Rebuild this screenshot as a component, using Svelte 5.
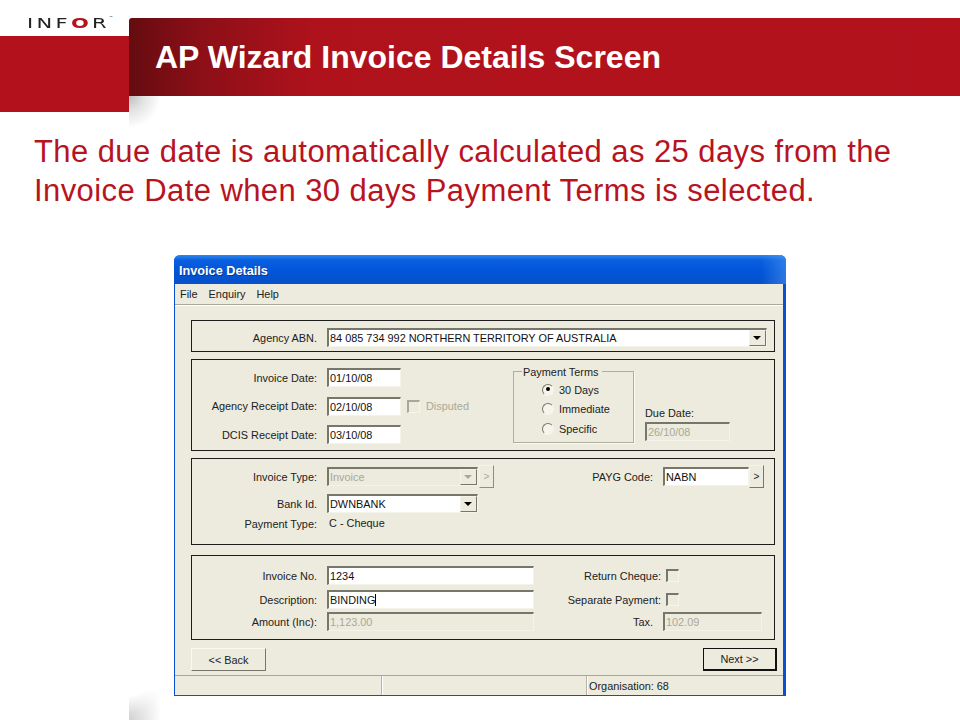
<script>
  const menus = ['File', 'Enquiry', 'Help']
  const terms = [
    { label: '30 Days', on: true },
    { label: 'Immediate', on: false },
    { label: 'Specific', on: false }
  ]
</script>

<div class="slide">
  <header class="top">
    <div class="brand">
      <div class="logo"><span class="mark">INF<b>O</b>R</span><sup>™</sup></div>
      <div class="block"></div>
    </div>
    <div class="banner">
      <h1>AP Wizard Invoice Details Screen</h1>
      <div class="shade"></div>
    </div>
  </header>

  <p class="lead">The due date is automatically calculated as 25 days from the Invoice Date when 30 days Payment Terms is selected.</p>

  <div class="stage">
    <div class="edge"></div>
    <div class="window">
      <div class="titlebar">Invoice Details</div>
      <nav class="menu">
        {#each menus as m}<span>{m}</span>{/each}
      </nav>

      <div class="client">
        <section class="frame f1">
          <div class="row">
            <label class="lbl" for="abn">Agency ABN.</label>
            <div class="field combo w440" id="abn">
              <span>84 085 734 992 NORTHERN TERRITORY OF AUSTRALIA</span>
              <i class="drop"></i>
            </div>
          </div>
        </section>

        <section class="frame f2">
          <div class="col dates">
            <div class="row">
              <span class="lbl">Invoice Date:</span>
              <div class="field w74">01/10/08</div>
            </div>
            <div class="row">
              <span class="lbl">Agency Receipt Date:</span>
              <div class="field w74">02/10/08</div>
              <i class="check off"></i>
              <span class="muted">Disputed</span>
            </div>
            <div class="row">
              <span class="lbl">DCIS Receipt Date:</span>
              <div class="field w74">03/10/08</div>
            </div>
          </div>
          <div class="group">
            <span class="legend">Payment Terms</span>
            {#each terms as t}
              <div class="radio-row">
                <i class="radio" class:on={t.on}></i>
                <span>{t.label}</span>
              </div>
            {/each}
          </div>
          <div class="due">
            <span>Due Date:</span>
            <div class="field off-field w85">26/10/08</div>
          </div>
        </section>

        <section class="frame f3">
          <div class="col types">
            <div class="row">
              <span class="lbl">Invoice Type:</span>
              <div class="field combo off-field w151">
                <span>Invoice</span>
                <i class="drop off"></i>
              </div>
              <button class="more off">&gt;</button>
            </div>
            <div class="row">
              <span class="lbl">Bank Id.</span>
              <div class="field combo w151">
                <span>DWNBANK</span>
                <i class="drop"></i>
              </div>
            </div>
            <div class="row pay">
              <span class="lbl">Payment Type:</span>
              <span class="value">C - Cheque</span>
            </div>
          </div>
          <div class="payg">
            <span class="lbl2">PAYG Code:</span>
            <div class="field w86">NABN</div>
            <button class="more">&gt;</button>
          </div>
        </section>

        <section class="frame f4">
          <div class="col nums">
            <div class="row">
              <span class="lbl">Invoice No.</span>
              <div class="field w207">1234</div>
            </div>
            <div class="row">
              <span class="lbl">Description:</span>
              <div class="field w207">BINDING<em class="caret"></em></div>
            </div>
            <div class="row">
              <span class="lbl">Amount (Inc):</span>
              <div class="field off-field w207">1,123.00</div>
            </div>
          </div>
          <div class="col extras">
            <div class="row end">
              <span>Return Cheque:</span>
              <i class="check"></i>
            </div>
            <div class="row end">
              <span>Separate Payment:</span>
              <i class="check"></i>
            </div>
            <div class="row tax">
              <span class="lbl2">Tax.</span>
              <div class="field off-field w99">102.09</div>
            </div>
          </div>
        </section>

        <div class="actions">
          <button class="btn">&lt;&lt; Back</button>
          <button class="btn primary">Next &gt;&gt;</button>
        </div>
      </div>

      <footer class="status">
        <span class="s1"></span>
        <span class="s2"></span>
        <span class="s3">Organisation: 68</span>
      </footer>
    </div>
  </div>
</div>

<style>
  :global(body) {
    margin: 0;
    background: #fff;
  }

  .slide {
    width: 960px;
    height: 720px;
    overflow: hidden;
    font-family: "Liberation Sans", Arial, sans-serif;
  }

  /* header */
  .top {
    display: flex;
    height: 128px;
  }
  .brand {
    width: 129px;
  }
  .logo {
    height: 36px;
    box-sizing: border-box;
    padding: 14px 0 0 27px;
    font-family: "DejaVu Sans", sans-serif;
    font-size: 14px;
    line-height: 18px;
    color: #222;
    white-space: nowrap;
    display: flex;
  }
  .mark {
    display: block;
    width: 52px;
    letter-spacing: 2.2px;
    transform: scaleX(1.5);
    transform-origin: 0 50%;
  }
  .logo b {
    color: #b5121b;
  }
  .logo sup {
    font-size: 4px;
    margin-left: 30px;
    line-height: 8px;
  }
  .block {
    height: 76px;
    background: #b3121d;
  }
  .banner {
    flex: 1;
    padding-top: 18px;
  }
  h1 {
    margin: 0;
    height: 78px;
    box-sizing: border-box;
    padding: 22px 0 0 26px;
    font-size: 32px;
    line-height: 34px;
    font-weight: 700;
    color: #fff;
    background: linear-gradient(90deg, #640c10 0, #8c0f17 70px, #b0121c 190px, #b3121d 100%);
    border-top-left-radius: 3px;
  }
  .shade {
    width: 32px;
    height: 32px;
    background: radial-gradient(ellipse 32px 32px at 0 0, #bdbdbd 0, #e2e2e2 45%, #fff 100%);
  }

  .lead {
    margin: 4px 0 0 34px;
    width: 890px;
    font-size: 31px;
    line-height: 39px;
    letter-spacing: 0.42px;
    color: #b8141f;
  }

  /* window */
  .stage {
    display: flex;
    margin-top: 45px;
  }
  .edge {
    width: 129px;
    flex: none;
    position: relative;
  }
  .edge::after {
    content: '';
    position: absolute;
    left: 129px;
    top: 435px;
    width: 32px;
    height: 30px;
    background: linear-gradient(160deg, #fff 15%, #d6d6d6 60%, #c8c8c8 100%);
    -webkit-mask-image: linear-gradient(90deg, #000, transparent);
    mask-image: linear-gradient(90deg, #000, transparent);
  }
  .window {
    width: 612px;
    height: 441px;
    margin-left: 45px;
    box-sizing: border-box;
    display: flex;
    flex-direction: column;
    background: #ecebdd;
    border: solid #0a50d0;
    border-width: 0 3px 1px 1px;
    border-radius: 6px 6px 0 0;
    font-size: 10.9px;
    color: #222;
    position: relative;
    z-index: 1;
  }
  .titlebar {
    height: 29px;
    margin: 0 -3px 0 -1px;
    box-sizing: border-box;
    padding: 9px 0 0 5px;
    font-size: 12.7px;
    line-height: 15px;
    font-weight: 700;
    color: #fff;
    background:
      linear-gradient(90deg, transparent 96%, rgba(80, 150, 240, .55) 100%),
      linear-gradient(180deg, #2f86ee 0, #0a5fe0 18%, #0055d8 60%, #0a50c8 100%);
    border-radius: 6px 6px 0 0;
    text-shadow: 1px 1px 0 #0a3a90;
  }
  .menu {
    height: 19px;
    padding-bottom: 1px;
    display: flex;
    align-items: center;
    padding-left: 5px;
    gap: 11px;
    border-bottom: 1px solid #a8a89c;
    box-shadow: 0 1px 0 #fff;
    flex: none;
  }
  .client {
    flex: 1;
    padding: 15px 8px 0 16px;
  }

  /* group frames */
  .frame {
    box-sizing: border-box;
    width: 584px;
    border: 1px solid #1c1c1c;
    margin-bottom: 7px;
    display: flex;
  }
  .f1 { height: 32px; padding-top: 7px; }
  .f2 { height: 92px; }
  .f3 { height: 87px; margin-bottom: 10px; }
  .f4 { height: 85px; margin-bottom: 8px; }

  .col {
    display: flex;
    flex-direction: column;
  }
  .row {
    display: flex;
    align-items: center;
    height: 19px;
  }
  .lbl {
    width: 125px;
    margin-right: 10px;
    text-align: right;
    flex: none;
  }

  /* sunken fields */
  .field {
    height: 19px;
    box-sizing: border-box;
    padding: 1px 0 0 1px;
    line-height: 15px;
    background: #fff;
    border: solid;
    border-width: 2px 1px 1px 2px;
    border-color: #77766a #f4f3ea #f4f3ea #77766a;
    white-space: nowrap;
    flex: none;
    color: #111;
  }
  .off-field {
    background: #ecebdd;
    color: #a9a898;
  }
  .combo {
    display: flex;
    justify-content: space-between;
    padding-right: 0;
  }
  .w74 { width: 74px; }
  .w85 { width: 85px; }
  .w86 { width: 86px; }
  .w99 { width: 99px; }
  .w151 { width: 151px; }
  .w207 { width: 207px; }
  .w440 { width: 440px; }

  .drop {
    width: 17px;
    height: 16px;
    margin-top: -1px;
    box-sizing: border-box;
    flex: none;
    background: #ecebdd;
    border: 1px solid;
    border-color: #f4f3ea #77766a #77766a #f4f3ea;
    position: relative;
  }
  .drop::after {
    content: '';
    position: absolute;
    left: 3px;
    top: 5px;
    border: 4px solid transparent;
    border-top: 4px solid #000;
    border-bottom: 0;
  }
  .drop.off::after {
    border-top-color: #a9a898;
  }

  .more {
    width: 15px;
    height: 23px;
    padding: 0;
    font: inherit;
    font-size: 10px;
    color: #222;
    background: #ecebdd;
    border: 1px solid;
    border-color: #f4f3ea #77766a #77766a #f4f3ea;
    flex: none;
    margin-left: 1px;
  }
  .more.off {
    color: #a9a898;
    border-color: #f4f3ea #8e8d80 #8e8d80 #f4f3ea;
  }

  .check {
    width: 13px;
    height: 13px;
    box-sizing: border-box;
    background: #ecebdd;
    border: solid;
    border-width: 2px 1px 1px 2px;
    border-color: #77766a #f6f5ec #f6f5ec #77766a;
    flex: none;
  }
  .check.off {
    margin: 0 6px;
    border-color: #a9a898 #f6f5ec #f6f5ec #a9a898;
  }
  .muted {
    color: #a9a898;
  }

  /* dates + payment terms */
  .dates {
    width: 321px;
    flex: none;
    padding-top: 8px;
    gap: 9.5px;
  }
  .group {
    width: 121px;
    height: 72px;
    margin-top: 11px;
    box-sizing: border-box;
    border: 1px solid #aeae9e;
    box-shadow: 1px 1px 0 #fafaf2;
    padding-left: 28px;
    flex: none;
  }
  .legend {
    display: block;
    width: max-content;
    margin: -6px 0 1px -20px;
    padding: 0 4px 0 1px;
    height: 13px;
    line-height: 13px;
    background: #ecebdd;
  }
  .radio-row {
    display: flex;
    align-items: center;
    gap: 5px;
    height: 19.5px;
  }
  .radio {
    width: 12px;
    height: 12px;
    box-sizing: border-box;
    border-radius: 50%;
    background: #f6f5ec;
    border: 1.5px solid;
    border-color: #77766a #f6f5ec #f6f5ec #77766a;
    position: relative;
    flex: none;
  }
  .radio.on::after {
    content: '';
    position: absolute;
    left: 2.5px;
    top: 2.5px;
    width: 4px;
    height: 4px;
    border-radius: 50%;
    background: #000;
  }
  .due {
    display: flex;
    flex-direction: column;
    margin: 47px 0 0 11px;
    gap: 3px;
  }

  /* type + payg */
  .types {
    width: 400px;
    flex: none;
    padding-top: 8px;
    gap: 8px;
  }
  .pay {
    margin-top: -7px;
  }
  .value {
    padding-left: 2px;
    margin-top: -2px;
  }
  .payg {
    display: flex;
    align-items: center;
    height: 19px;
    margin-top: 8px;
  }
  .lbl2 {
    width: 61px;
    text-align: right;
    margin-right: 10px;
    flex: none;
    white-space: nowrap;
  }
  .payg .more {
    margin-left: 0;
  }

  /* invoice no + tax */
  .nums {
    width: 342px;
    flex: none;
    padding-top: 10px;
    gap: 5px;
  }
  .nums .row:last-child {
    margin-top: -2px;
  }
  .caret {
    display: inline-block;
    width: 1px;
    height: 12px;
    vertical-align: -2px;
    background: #000;
  }
  .extras {
    width: 240px;
    padding-top: 10px;
    gap: 5px;
  }
  .row.end {
    width: 145px;
    justify-content: flex-end;
    gap: 5px;
  }
  .row.tax {
    margin-top: -2px;
  }
  .tax .lbl2 {
    width: 119px;
  }

  /* buttons + status */
  .actions {
    display: flex;
    justify-content: space-between;
    width: 586px;
  }
  .btn {
    width: 75px;
    height: 23px;
    padding: 0;
    font: inherit;
    color: #222;
    background: #ecebdd;
    border: 1px solid;
    border-color: #fafaf2 #77766a #77766a #fafaf2;
  }
  .btn.primary {
    width: 74px;
    border: 1px solid #111;
    border-width: 1px 2px 2px 1px;
  }
  .status {
    height: 20px;
    display: flex;
    border-top: 1px solid #a8a89c;
    box-sizing: border-box;
    flex: none;
  }
  .status span {
    border-right: 1px solid #b4b4a6;
    box-shadow: 1px 0 0 #fff;
    height: 100%;
    line-height: 20px;
  }
  .s1 { width: 206px; }
  .s2 { width: 204px; }
  .s3 {
    border: 0 !important;
    box-shadow: none !important;
    padding-left: 2px;
    color: #222;
  }
</style>
